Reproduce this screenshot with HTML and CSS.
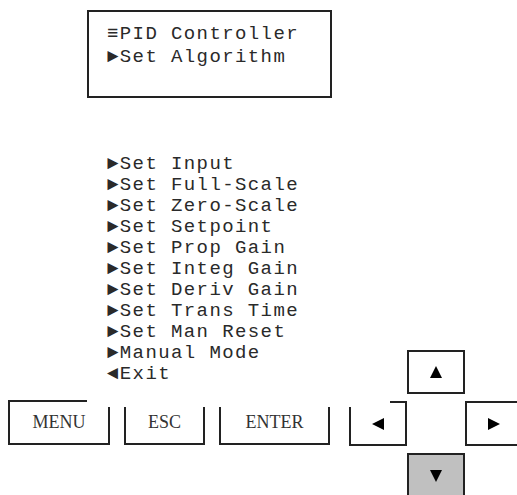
FILE: index.html
```html
<!DOCTYPE html>
<html>
<head>
<meta charset="utf-8">
<link rel="stylesheet" href="styles.css">
</head>
<body>
<div class="lcd">
  <div class="line">≡PID Controller</div>
  <div class="line">►Set Algorithm</div>
</div>
<div class="menu">
  <div class="line">►Set Input</div>
  <div class="line">►Set Full-Scale</div>
  <div class="line">►Set Zero-Scale</div>
  <div class="line">►Set Setpoint</div>
  <div class="line">►Set Prop Gain</div>
  <div class="line">►Set Integ Gain</div>
  <div class="line">►Set Deriv Gain</div>
  <div class="line">►Set Trans Time</div>
  <div class="line">►Set Man Reset</div>
  <div class="line">►Manual Mode</div>
  <div class="line">◄Exit</div>
</div>
<div class="controls">
  <div class="keys">
    <div class="btn btn-menu">MENU</div>
    <div class="btn btn-esc">ESC</div>
    <div class="btn btn-enter">ENTER</div>
  </div>
  <div class="pad">
    <div class="btn arrow a-up"><svg width="12" height="12" viewBox="0 0 12 12"><polygon points="6,0 12,12 0,12" fill="#000"/></svg></div>
    <div class="btn arrow a-left"><svg width="12" height="12" viewBox="0 0 12 12"><polygon points="0,6 12,0 12,12" fill="#000"/></svg></div>
    <div class="btn arrow a-right"><svg width="12" height="12" viewBox="0 0 12 12"><polygon points="12,6 0,0 0,12" fill="#000"/></svg></div>
    <div class="btn arrow a-down"><svg width="12" height="12" viewBox="0 0 12 12"><polygon points="6,12 12,0 0,0" fill="#000"/></svg></div>
  </div>
</div>
</body>
</html>
```
FILE: styles.css
```css
html, body {
  margin: 0;
  padding: 0;
  overflow: hidden;
  background: #fff;
}
body {
  width: 517px;
  height: 495px;
  font-family: "Liberation Mono", "Courier New", monospace;
  color: #2a2a2a;
}
.lcd {
  box-sizing: border-box;
  margin: 10px 0 0 87px;
  width: 245px;
  height: 88px;
  border: 2px solid #222;
  padding: 11px 0 0 18px;
  font-size: 19px;
  letter-spacing: 1.4px;
  line-height: 23px;
}
.menu {
  position: relative;
  z-index: 1;
  background: #fff;
  margin-left: 87px;
  width: 303px;
  box-sizing: border-box;
  padding: 56px 0 22px 20px;
  font-size: 19px;
  letter-spacing: 1.4px;
  line-height: 21px;
}
.line {
  white-space: pre;
}
.controls {
  display: flex;
  align-items: flex-start;
  margin-top: -57px;
  padding-left: 8px;
  gap: 19px;
}
.keys {
  display: flex;
  gap: 14px;
  margin-top: 50px;
}
.btn {
  box-sizing: border-box;
  height: 45px;
  border: 2px solid #222;
  display: flex;
  align-items: center;
  justify-content: center;
  font-family: "Liberation Serif", "Times New Roman", serif;
  font-size: 18px;
  color: #333;
}
.btn-menu { width: 102px; }
.btn-esc { width: 81px; }
.btn-enter { width: 111px; }
.pad {
  display: grid;
  grid-template-columns: 58px 58px 58px;
  grid-template-rows: 44px 45px 45px;
  row-gap: 7px;
  flex: none;
}
.arrow { height: auto; }
.a-up { grid-column: 2; grid-row: 1; }
.a-left { grid-column: 1; grid-row: 2; }
.a-right { grid-column: 3; grid-row: 2; }
.a-down { grid-column: 2; grid-row: 3; background: #c0c0c0; }
```
